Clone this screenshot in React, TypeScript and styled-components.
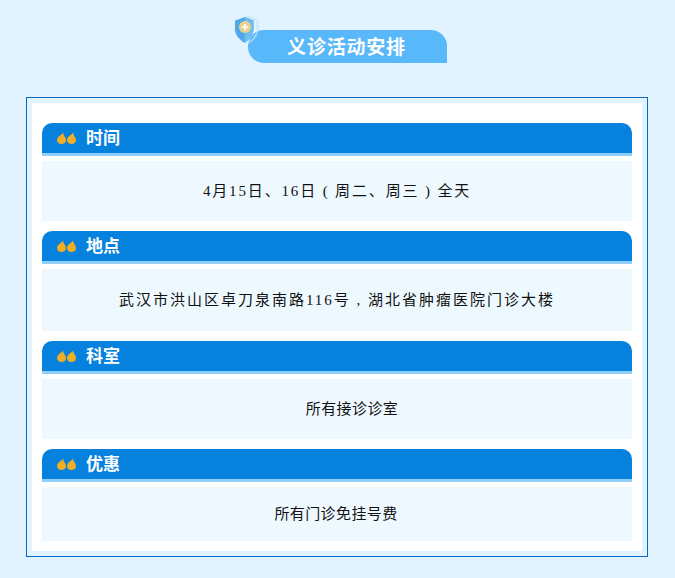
import React from "react";
import styled, { createGlobalStyle } from "styled-components";

const Global = createGlobalStyle`
  html, body { margin: 0; padding: 0; background: #e1f3ff; }
  body { font-family: "Noto Sans CJK SC", "Liberation Sans", sans-serif; }
`;

const Page = styled.div`
  width: 675px;
  height: 578px;
  background: #e1f3ff;
  padding: 15px 26px 0 26px;
  box-sizing: border-box;
  overflow: hidden;
`;

const TitleRow = styled.div`
  display: flex;
  justify-content: center;
  height: 82px;
`;

const TitleWrap = styled.div`
  position: relative;
  margin-top: 15px;
  margin-left: 20px;
`;

const TitleBar = styled.h1`
  margin: 0;
  width: 199px;
  height: 33px;
  box-sizing: border-box;
  padding-right: 2px;
  background: #59b8fa;
  border-radius: 16px 16px 0 16px;
  color: #fff;
  font-size: 19px;
  font-weight: 700;
  line-height: 31px;
  text-align: center;
  letter-spacing: 0.8px;
`;

const ShieldIcon = styled.svg`
  position: absolute;
  left: -14px;
  top: -15px;
  width: 25px;
  height: 30px;
`;

const Frame = styled.div`
  width: 622px;
  height: 460px;
  box-sizing: border-box;
  border: 1px solid #0a68c4;
  padding: 5px;
`;

const Panel = styled.div`
  background: #fff;
  height: 448px;
  box-sizing: border-box;
  padding: 20px 10px 10px;
  display: flex;
  flex-direction: column;
  gap: 10px;
`;

const Section = styled.section`
  display: flex;
  flex-direction: column;
`;

const Header = styled.div`
  height: 30px;
  background: #0781de;
  border-radius: 10px 10px 0 0;
  border-bottom: 3px solid #8ed0fb;
  box-sizing: content-box;
  display: flex;
  align-items: center;
  padding-left: 15px;
  gap: 10px;
`;

const HeaderTitle = styled.h2`
  margin: 0;
  color: #fff;
  font-size: 17px;
  font-weight: 700;
  line-height: 28px;
  height: 30px;
`;

const Quote = styled.svg`
  width: 19px;
  height: 12px;
  flex: none;
`;

const Body = styled.div<{ $height: number; $spacing: number; $left: number; $right: number }>`
  margin-top: 5px;
  height: ${(p) => p.$height}px;
  box-sizing: border-box;
  padding: 0 ${(p) => p.$right}px 3px ${(p) => p.$left}px;
  background: #eef9ff;
  display: flex;
  align-items: center;
  justify-content: center;
  color: #111;
  font-family: "Liberation Serif", "Noto Sans CJK SC", serif;
  font-size: 15px;
  white-space: pre;
  letter-spacing: ${(p) => p.$spacing}px;
`;

const sections = [
  { title: "时间", text: "4月15日、16日 ( 周二、周三 ) 全天", h: 60, s: 1.85, l: 0, r: 0 },
  { title: "地点", text: "武汉市洪山区卓刀泉南路116号 , 湖北省肿瘤医院门诊大楼", h: 62, s: 2, l: 0, r: 0 },
  { title: "科室", text: "所有接诊诊室", h: 60, s: 0.4, l: 30, r: 0 },
  { title: "优惠", text: "所有门诊免挂号费", h: 54, s: 0.4, l: 0, r: 2 },
];

const DROP =
  "M6.2 0.2 C5.6 2.6 0 4.2 0 7.9 C0 10.4 2 12 4.5 12 C7 12 9 10.4 9 7.9 C9 5 6 3.6 6.2 0.2 Z";

export default function App() {
  return (
    <Page>
      <Global />
      <TitleRow>
        <TitleWrap>
          <ShieldIcon viewBox="0 0 25 30">
            <path
              d="M13 1 L23.5 5.5 V14 C23.5 21 18 26 13 28.8"
              fill="none"
              stroke="#bfe3fa"
              strokeWidth="1.6"
              strokeDasharray="2 0.6"
            />
            <path d="M11 2 L19.5 5.6 V14 C19.5 20 15 24.5 10.5 28 C5.5 24.5 1 20 1 14 V5.6 Z" fill="#4fa8e8" />
            <path d="M11 2 L19.5 5.6 V14 C19.5 20 15 24.5 10.5 28 Z" fill="#6dbdf1" />
            <circle cx="11" cy="12" r="6" fill="#ecd08f" />
            <path d="M11 9 V15 M8 12 H14" stroke="#fff" strokeWidth="1.5" />
          </ShieldIcon>
          <TitleBar>义诊活动安排</TitleBar>
        </TitleWrap>
      </TitleRow>
      <Frame>
        <Panel>
          {sections.map((s) => (
            <Section key={s.title}>
              <Header>
                <Quote viewBox="0 0 19 12">
                  <path d={DROP} fill="#f0ae25" />
                  <path d={DROP} transform="translate(10 0)" fill="#f0ae25" />
                </Quote>
                <HeaderTitle>{s.title}</HeaderTitle>
              </Header>
              <Body $height={s.h} $spacing={s.s} $left={s.l} $right={s.r}>{s.text}</Body>
            </Section>
          ))}
        </Panel>
      </Frame>
    </Page>
  );
}
